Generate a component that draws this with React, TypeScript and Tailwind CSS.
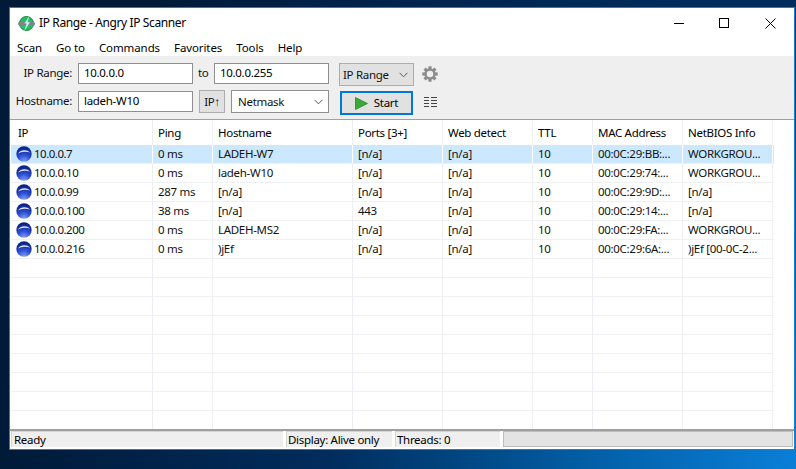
import React from "react";

const cols = [142, 60, 140, 90, 90, 60, 90, 90];
const headers = ["IP", "Ping", "Hostname", "Ports [3+]", "Web detect", "TTL", "MAC Address", "NetBIOS Info"];
const rows = [
  ["10.0.0.7", "0 ms", "LADEH-W7", "[n/a]", "[n/a]", "10", "00:0C:29:BB:...", "WORKGROU..."],
  ["10.0.0.10", "0 ms", "ladeh-W10", "[n/a]", "[n/a]", "10", "00:0C:29:74:...", "WORKGROU..."],
  ["10.0.0.99", "287 ms", "[n/a]", "[n/a]", "[n/a]", "10", "00:0C:29:9D:...", "[n/a]"],
  ["10.0.0.100", "38 ms", "[n/a]", "443", "[n/a]", "10", "00:0C:29:14:...", "[n/a]"],
  ["10.0.0.200", "0 ms", "LADEH-MS2", "[n/a]", "[n/a]", "10", "00:0C:29:FA:...", "WORKGROU..."],
  ["10.0.0.216", "0 ms", ")jEf", "[n/a]", "[n/a]", "10", "00:0C:29:6A:...", ")jEf [00-0C-2..."],
  ...Array.from({ length: 9 }, () => ["", "", "", "", "", "", "", ""]),
];

function Globe({ id }: { id: number }) {
  return (
    <svg width="16" height="16" viewBox="0 0 16 16" className="shrink-0">
      <defs>
        <radialGradient id={`g${id}`} cx="0.5" cy="1" r="0.95">
          <stop offset="0" stopColor="#8aa3f2" />
          <stop offset="0.45" stopColor="#2f50d8" />
          <stop offset="0.8" stopColor="#14309c" />
          <stop offset="1" stopColor="#0d2080" />
        </radialGradient>
      </defs>
      <circle cx="8" cy="8" r="7.7" fill={`url(#g${id})`} />
      <path d="M2 7.4C3.6 5 6 4.2 8.4 4.2c2.2 0 4 .7 5.6 2.4-2.2-.8-4-1-6-.8-2.2.2-4 .8-6 1.6z" fill="#e6ecff" />
    </svg>
  );
}

function Logo() {
  return (
    <svg width="17" height="17" viewBox="0 0 17 17">
      <circle cx="8.5" cy="8.5" r="7" fill="#27bf5e" />
      <circle cx="8.5" cy="8.5" r="7" fill="none" stroke="#14883c" strokeWidth="1" />
      <rect x="0" y="7" width="17" height="3.4" rx="1.5" fill="#7a888b" />
      <path d="M11.5 0.5 6.5 8.5h2.2L6 16.5l6-9.2H9.6z" fill="#c5f3f7" />
    </svg>
  );
}

function Chevron() {
  return (
    <svg width="9" height="6" viewBox="0 0 9 6" className="shrink-0">
      <path d="M.5.8l4 4 4-4" fill="none" stroke="#5a5a5a" strokeWidth="1" />
    </svg>
  );
}

function Gear() {
  const teeth = [0, 45, 90, 135, 180, 225, 270, 315];
  return (
    <svg width="16" height="16" viewBox="0 0 17 17" className="ml-[8px]">
      {teeth.map((a) => (
        <rect key={a} x="6.8" y="0.3" width="3.4" height="4" fill="#8c8c8c" transform={`rotate(${a} 8.5 8.5)`} />
      ))}
      <circle cx="8.5" cy="8.5" r="4.8" fill="none" stroke="#8c8c8c" strokeWidth="2.6" />
    </svg>
  );
}

function Field({ value, w }: { value: string; w: string }) {
  return (
    <div className={`${w} h-[21px] border border-[#8f8f8f] bg-white pl-[5px] leading-[18px] text-black`}>{value}</div>
  );
}

export default function App() {
  return (
    <div
      className="h-[469px] w-[796px] overflow-hidden bg-[radial-gradient(circle_at_100%_100%,#0a7fd8_0,#0360a8_200px,#003a70_400px,#012c5c_470px,#001a38_800px)] pl-[9px] pt-[7px] text-[11.5px] tracking-[-0.3px] text-[#111]"
      style={{ fontFamily: '"Noto Sans", sans-serif' }}
    >
      <div className="flex h-[443px] w-[786px] flex-col border border-[#1f7fc4] bg-white">
        {/* title bar */}
        <div className="flex h-[30px] shrink-0 items-center pl-[8px]">
          <Logo />
          <span className="ml-[4px] text-[12px] tracking-[-0.38px] text-black">IP Range - Angry IP Scanner</span>
          <div className="ml-auto flex items-center pr-[18px]">
            <div className="h-px w-[10px] bg-black" />
            <div className="ml-[35px] h-[10px] w-[10px] border border-black" />
            <svg width="11" height="11" viewBox="0 0 11 11" className="ml-[36px]">
              <path d="M.5.5l10 10M10.5.5l-10 10" stroke="#000" strokeWidth="1" />
            </svg>
          </div>
        </div>
        {/* menu */}
        <div className="flex h-[18px] shrink-0 items-center gap-[14px] pl-[7px] pt-[2px] tracking-[-0.1px] text-black">
          {["Scan", "Go to", "Commands", "Favorites", "Tools", "Help"].map((m) => (
            <span key={m}>{m}</span>
          ))}
        </div>
        {/* toolbar */}
        <div className="flex h-[63px] shrink-0 flex-col bg-[#efefef] pt-[7px]">
          <div className="flex h-[23px] items-start">
            <span className="w-[62px] pt-[1px] text-right">IP Range:</span>
            <div className="ml-[6px]">
              <Field value="10.0.0.0" w="w-[115px]" />
            </div>
            <span className="ml-[5px] w-[16px] pt-[1px]">to</span>
            <Field value="10.0.0.255" w="w-[115px]" />
            <div className="ml-[10px] flex h-[23px] w-[75px] items-center justify-between border border-[#adadad] bg-[#e1e1e1] pl-[3px] pr-[5px]">
              <span>IP Range</span>
              <Chevron />
            </div>
            <div className="mt-[3px]">
              <Gear />
            </div>
          </div>
          <div className="mt-[4px] flex items-start">
            <span className="w-[62px] pt-[2px] text-right">Hostname:</span>
            <div className="ml-[6px] mt-[1px]">
              <Field value="ladeh-W10" w="w-[115px]" />
            </div>
            <div className="ml-[6px] flex h-[23px] w-[26px] items-center justify-center border border-[#adadad] bg-[#e1e1e1]">IP↑</div>
            <div className="ml-[6px] flex h-[23px] w-[98px] items-center justify-between border border-[#8f8f8f] bg-white pl-[6px] pr-[5px]">
              <span>Netmask</span>
              <Chevron />
            </div>
            <div className="ml-[11px] mt-[1px] flex h-[24px] w-[73px] items-center justify-center gap-[6px] border-2 border-[#0078d7] bg-[#e1e1e1]">
              <svg width="13" height="13" viewBox="0 0 13 13">
                <path d="M.5.5v12L12.5 6.5z" fill="#3aa935" stroke="#2b8c2a" strokeWidth="0.8" />
              </svg>
              <span className="text-black">Start</span>
            </div>
            <svg width="13" height="11" viewBox="0 0 13 11" className="ml-[11px] mt-[7px]">
              <path d="M0 .5h5M7 .5h6M0 3.5h5M7 3.5h6M0 6.5h5M7 6.5h6M0 9.5h5M7 9.5h6" stroke="#444" strokeWidth="1" />
            </svg>
          </div>
        </div>
        {/* table */}
        <div className="flex min-h-0 flex-1 flex-col overflow-hidden border-t border-[#a0a0a0] bg-white pl-px">
          <div className="flex h-[25px] shrink-0">
            {headers.map((h, i) => (
              <div
                key={h}
                style={{ width: cols[i] }}
                className={`flex items-center border-r border-[#eceef3] text-black ${i === 0 ? "pl-[7px]" : "pl-[5px]"}`}
              >
                {h}
              </div>
            ))}
          </div>
          {rows.map((r, i) => (
            <div key={i} className={`flex h-[19px] w-[763px] shrink-0 border-b border-[#eff0f4] ${i === 0 ? "bg-[#cce8ff]" : ""}`}>
              {r.map((c, j) => (
                <div
                  key={j}
                  style={{ width: cols[j] }}
                  className={`flex items-center whitespace-nowrap border-r pl-[5px] ${i === 0 ? "border-white" : "border-[#eceef3]"}`}
                >
                  {j === 0 && c ? (
                    <>
                      <Globe id={i} />
                      <span className="ml-[2px] tracking-[-0.5px]">{c}</span>
                    </>
                  ) : (
                    c
                  )}
                </div>
              ))}
            </div>
          ))}
        </div>
        {/* status */}
        <div className="flex h-[20px] shrink-0 gap-[3px] border-t-2 border-[#a0a0a0] bg-white pb-[2px] pl-px text-black">
          <div className="w-[272px] border-l border-t border-[#d4d4d4] bg-[#efefef] pl-[2px] leading-[15px]">Ready</div>
          <div className="w-[106px] border-l border-t border-[#d4d4d4] bg-[#efefef] pl-[1px] leading-[15px]">Display: Alive only</div>
          <div className="w-[105px] border-l border-t border-[#d4d4d4] bg-[#efefef] pl-[1px] leading-[15px]">Threads: 0</div>
          <div className="w-[290px] border border-[#bcbcbc] bg-[#e3e3e3]" />
        </div>
      </div>
    </div>
  );
}
